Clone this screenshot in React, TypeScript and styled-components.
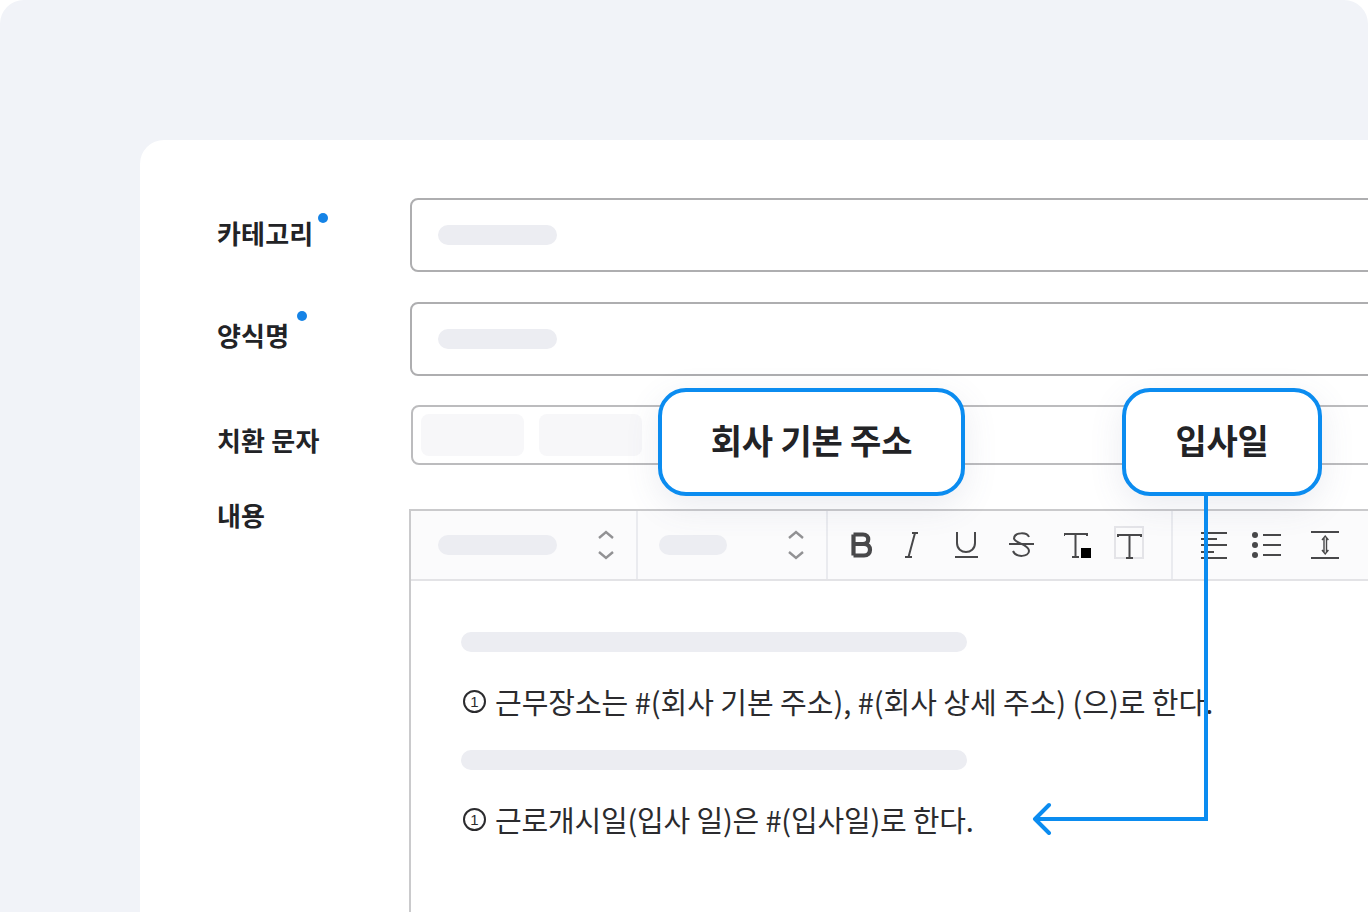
import styled, { createGlobalStyle } from "styled-components";

const GlobalStyle = createGlobalStyle`
  html, body {
    margin: 0;
    padding: 0;
    background: #ffffff;
    font-family: "Noto Sans CJK KR", "Noto Sans", sans-serif;
  }
`;

const Stage = styled.div`
  position: relative;
  width: 1368px;
  height: 912px;
  padding: 140px 0 0 140px;
  box-sizing: border-box;
  background: #f1f3f8;
  border-radius: 24px 24px 0 0;
  overflow: hidden;
`;

const Card = styled.div`
  height: 772px;
  width: 1400px;
  padding: 58px 0 0 77px;
  box-sizing: border-box;
  background: #ffffff;
  border-top-left-radius: 24px;
`;

const Row = styled.div<{ $top?: number }>`
  display: flex;
  align-items: flex-start;
  margin-top: ${(props) => props.$top ?? 0}px;
`;

const LabelCell = styled.div<{ $offset: number; $width: number }>`
  flex: 0 0 ${(props) => props.$width}px;
  margin-top: ${(props) => props.$offset}px;
`;

const Label = styled.span`
  position: relative;
  display: inline-block;
  font-size: 26px;
  line-height: 32px;
  font-weight: 700;
  letter-spacing: 0.2px;
  color: #222326;
`;

const RequiredDot = styled.i<{ $top: number; $right: number }>`
  position: absolute;
  top: ${(props) => props.$top}px;
  right: ${(props) => props.$right}px;
  width: 10px;
  height: 10px;
  border-radius: 50%;
  background: #1583e6;
`;

const Field = styled.div<{ $height: number }>`
  display: flex;
  align-items: center;
  flex: 0 0 1100px;
  height: ${(props) => props.$height}px;
  box-sizing: border-box;
  border: 2px solid #aeaeb0;
  border-radius: 8px;
`;

const InputField = styled(Field)`
  padding-left: 26px;
`;

const TagField = styled(Field)`
  gap: 15px;
  padding-left: 8px;
  border-color: #bcbcbe;
`;

const Skeleton = styled.div<{ $width: number }>`
  flex: none;
  width: ${(props) => props.$width}px;
  height: 20px;
  border-radius: 10px;
  background: #ecedf2;
`;

const Tag = styled.div`
  width: 103px;
  height: 42px;
  border-radius: 8px;
  background: #f7f7f9;
`;

const Editor = styled.div`
  flex: 0 0 1100px;
  height: 420px;
  box-sizing: border-box;
  border-top: 2px solid #cacacc;
  border-left: 2px solid #cacacc;
`;

const Toolbar = styled.div`
  display: flex;
  height: 70px;
  background: #fbfbfc;
  border-bottom: 2px solid #e3e3e6;
  box-sizing: border-box;
`;

const SelectGroup = styled.div<{ $width: number; $left: number; $right: number }>`
  display: flex;
  align-items: center;
  justify-content: space-between;
  width: ${(props) => props.$width}px;
  padding: 0 ${(props) => props.$right}px 0 ${(props) => props.$left}px;
  box-sizing: border-box;
  border-right: 2px solid #eaebef;
`;

const IconGroup = styled.div<{ $width?: number; $left: number; $divided?: boolean }>`
  display: flex;
  align-items: center;
  ${(props) => (props.$width ? `width: ${props.$width}px;` : "")}
  padding-left: ${(props) => props.$left}px;
  box-sizing: border-box;
  ${(props) => (props.$divided ? "border-right: 2px solid #eaebef;" : "")}
`;

const ToolIcon = styled.svg<{ $gap?: number; $lift?: number }>`
  display: block;
  flex: none;
  margin-left: ${(props) => props.$gap ?? 0}px;
  margin-bottom: ${(props) => props.$lift ?? 0}px;
  fill: none;
  stroke: #48484a;
  stroke-width: 2;
`;

const Body = styled.div`
  display: flex;
  flex-direction: column;
  gap: 30px;
  padding: 51px 0 0 50px;
`;

const Line = styled.p<{ $spacing: number }>`
  display: flex;
  align-items: center;
  margin: 0;
  font-size: 29px;
  line-height: 38px;
  font-weight: 400;
  letter-spacing: ${(props) => props.$spacing}px;
  color: #2b2b2e;
  white-space: nowrap;
`;

const Numbering = styled.span`
  display: inline-flex;
  align-items: center;
  justify-content: center;
  width: 23px;
  height: 23px;
  margin: 0 9px 0 2px;
  box-sizing: border-box;
  border: 2px solid #2b2b2e;
  border-radius: 50%;
  font-family: "Liberation Sans", sans-serif;
  font-size: 15px;
  line-height: 1;
  font-weight: 400;
  letter-spacing: 0;
`;

const Callout = styled.div<{ $left: number; $width: number }>`
  position: absolute;
  left: ${(props) => props.$left}px;
  top: 388px;
  display: flex;
  align-items: center;
  justify-content: center;
  width: ${(props) => props.$width}px;
  height: 108px;
  padding-bottom: 6px;
  box-sizing: border-box;
  border: 4px solid #0b8cf0;
  border-radius: 28px;
  background: #ffffff;
  box-shadow: 0 10px 34px rgba(90, 100, 140, 0.12);
  font-size: 34px;
  font-weight: 700;
  letter-spacing: -0.2px;
  color: #222326;
`;

const Connector = styled.svg`
  position: absolute;
  left: 1020px;
  top: 490px;
  fill: none;
  stroke: #0b8cf0;
  stroke-width: 4;
`;

const Chevrons = () => (
  <ToolIcon width="18" height="30" viewBox="0 0 18 30" style={{ stroke: "#929294", strokeWidth: 2.4 }}>
    <path d="M2 8l7-6 7 6" />
    <path d="M2 22l7 6 7-6" />
  </ToolIcon>
);

const ColorTextIcon = () => (
  <ToolIcon $gap={30} width="27" height="27" viewBox="0 0 27 27">
    <path d="M0 4V2h23v2M11.500 2v23M8 25h7" />
    <rect x="17" y="16" width="10" height="10" fill="#000" stroke="none" />
  </ToolIcon>
);

export default function App() {
  return (
    <>
      <GlobalStyle />
      <Stage>
        <Card>
          <Row>
            <LabelCell $offset={19} $width={193}>
              <Label>
                카테고리
                <RequiredDot $top={-4} $right={-15} />
              </Label>
            </LabelCell>
            <InputField $height={74}>
              <Skeleton $width={119} />
            </InputField>
          </Row>
          <Row $top={30}>
            <LabelCell $offset={17} $width={193}>
              <Label>
                양식명
                <RequiredDot $top={-8} $right={-18} />
              </Label>
            </LabelCell>
            <InputField $height={74}>
              <Skeleton $width={119} />
            </InputField>
          </Row>
          <Row $top={29}>
            <LabelCell $offset={19} $width={194}>
              <Label>치환 문자</Label>
            </LabelCell>
            <TagField $height={60}>
              <Tag />
              <Tag />
            </TagField>
          </Row>
          <Row $top={44}>
            <LabelCell $offset={-10} $width={192}>
              <Label>내용</Label>
            </LabelCell>
            <Editor>
              <Toolbar>
                <SelectGroup $width={227} $left={27} $right={21}>
                  <Skeleton $width={119} />
                  <Chevrons />
                </SelectGroup>
                <SelectGroup $width={190} $left={21} $right={21}>
                  <Skeleton $width={68} />
                  <Chevrons />
                </SelectGroup>
                <IconGroup $width={345} $left={23} $divided>
                  <ToolIcon width="22" height="26" viewBox="0 0 22 26" style={{ strokeWidth: 4.2 }}>
                    <path d="M2.500 2.500v21M2.500 2.500h9.500c7 0 7 9.500 0 9.500H2.500M2.500 12h10.500c8 0 8 11.500 0 11.500H2.500" />
                  </ToolIcon>
                  <ToolIcon $gap={32} width="13" height="26" viewBox="0 0 13 26">
                    <path d="M7 1h6M0 25h7M10 1L3.500 25" />
                  </ToolIcon>
                  <ToolIcon $gap={37} width="23" height="26" viewBox="0 0 23 26">
                    <path d="M2 0v11c0 12 18 12 18 0V0M0 25h23" />
                  </ToolIcon>
                  <ToolIcon $gap={31} width="25" height="26" viewBox="0 0 25 26">
                    <path d="M20 5c-2-5-14-5-15 1-1 5 15 6 15 13 0 6-13 7-16 0M0 12h25" />
                  </ToolIcon>
                  <ColorTextIcon />
                  <ToolIcon $gap={23} $lift={5} width="30" height="33" viewBox="0 0 30 33">
                    <rect x="1" y="1" width="28" height="31" stroke="#e4e4e8" strokeWidth="2" />
                    <path d="M4 11V9h23v2M15.500 9v23M12 32h7" />
                  </ToolIcon>
                </IconGroup>
                <IconGroup $left={28}>
                  <ToolIcon width="26" height="28" viewBox="0 0 26 28">
                    <path d="M0 2h26M0 8h16M0 14h26M0 21h13M0 27h26" />
                  </ToolIcon>
                  <ToolIcon $gap={24} width="31" height="26" viewBox="0 0 31 26">
                    <circle cx="4" cy="3" r="3" fill="#48484a" stroke="none" />
                    <circle cx="4" cy="13" r="3" fill="#48484a" stroke="none" />
                    <circle cx="4" cy="23" r="3" fill="#48484a" stroke="none" />
                    <path d="M12 3h18M12 13h18M12 23h18" />
                  </ToolIcon>
                  <ToolIcon $gap={29} width="28" height="28" viewBox="0 0 28 28">
                    <path d="M0 1h28M0 27h28" />
                    <path d="M13 7v14M15.500 7v14M11 9l3.200-4 3.200 4M11 19l3.200 4 3.200-4" strokeWidth="1.4" />
                  </ToolIcon>
                </IconGroup>
              </Toolbar>
              <Body>
                <Skeleton $width={506} />
                <Line $spacing={-0.03}>
                  <Numbering>1</Numbering>근무장소는 #(회사 기본 주소), #(회사 상세 주소) (으)로 한다.
                </Line>
                <Skeleton $width={506} />
                <Line $spacing={-0.18}>
                  <Numbering>1</Numbering>근로개시일(입사 일)은 #(입사일)로 한다.
                </Line>
              </Body>
            </Editor>
          </Row>
        </Card>
        <Callout $left={658} $width={307}>회사 기본 주소</Callout>
        <Callout $left={1122} $width={200}>입사일</Callout>
        <Connector width="200" height="345" viewBox="0 0 200 345">
          <path d="M186 4v325H16" />
          <path d="M29 315L15 329l14 14" strokeLinecap="round" strokeLinejoin="round" />
        </Connector>
      </Stage>
    </>
  );
}
